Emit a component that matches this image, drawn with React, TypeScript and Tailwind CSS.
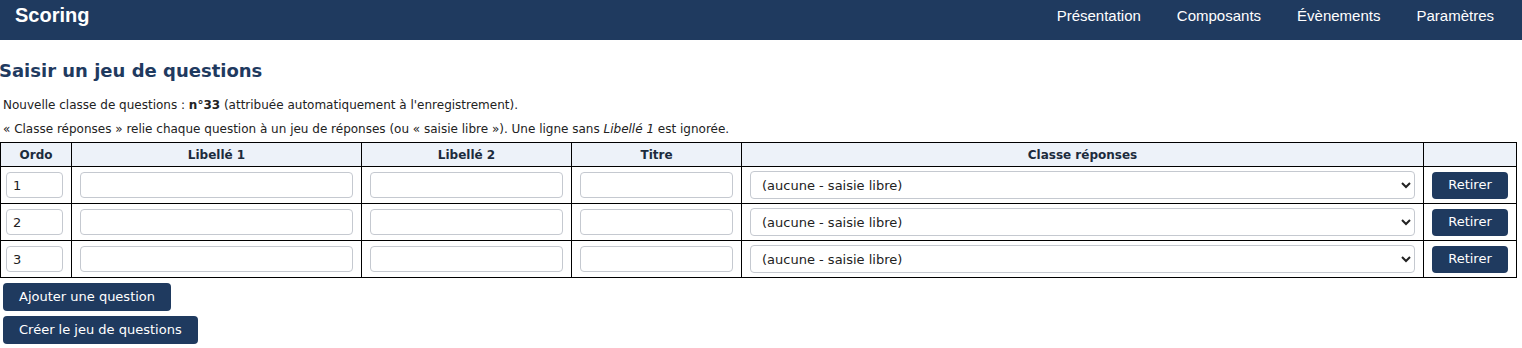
import React from "react";

const rows = [1, 2, 3];

export default function App() {
  return (
    <div className="min-h-[348px] bg-white text-[#222] font-['DejaVu_Sans',sans-serif]">
      <header className="h-[40px] bg-[#1f3a5f] flex items-start justify-between pl-[15px] pr-[10px] font-['Liberation_Sans',Arial,sans-serif] text-white">
        <div className="text-[20px] font-bold leading-[20px] pt-[5px]">Scoring</div>
        <nav className="flex text-[15px] leading-[15px] pt-[8px]">
          {["Présentation", "Composants", "Évènements", "Paramètres"].map((t) => (
            <a key={t} className="px-[18px]">{t}</a>
          ))}
        </nav>
      </header>
      <main className="pr-[6px]">
        <h1 className="text-[18px] font-bold text-[#1f3a5f] leading-[22px] mt-[20px] ml-[-1px]">Saisir un jeu de questions</h1>
        <p className="text-[12px] leading-[14px] mt-[16px] ml-[3px]">
          Nouvelle classe de questions : <b>n°33</b> (attribuée automatiquement à l'enregistrement).
        </p>
        <p className="text-[12px] leading-[14px] mt-[10px] ml-[3px]">
          « Classe réponses » relie chaque question à un jeu de réponses (ou « saisie libre »). Une ligne sans <i>Libellé 1</i> est ignorée.
        </p>
        <table className="mt-[6px] w-full table-fixed border-collapse text-[12px]">
          <colgroup>
            <col className="w-[71px]" />
            <col className="w-[290px]" />
            <col className="w-[210px]" />
            <col className="w-[170px]" />
            <col className="w-[682px]" />
            <col className="w-[93px]" />
          </colgroup>
          <thead>
            <tr className="bg-[#edf2f9] h-[24px]">
              {["Ordo", "Libellé 1", "Libellé 2", "Titre", "Classe réponses", ""].map((h, i) => (
                <th key={i} className="border border-black font-bold text-[#1c2b3d] text-center py-0">{h}</th>
              ))}
            </tr>
          </thead>
          <tbody>
            {rows.map((n) => (
              <tr key={n} className="h-[37px]">
                <td className="border border-black pl-[5px] pr-[8px]">
                  <input defaultValue={String(n)} className="w-[57px] h-[26px] border border-[#c5c9d0] rounded-[4px] px-[6px] text-[13px] text-[#222] block" />
                </td>
                {[0, 1, 2].map((k) => (
                  <td key={k} className="border border-black px-[8px]">
                    <input className="w-full h-[26px] border border-[#c5c9d0] rounded-[4px] px-[6px] block" />
                  </td>
                ))}
                <td className="border border-black px-[8px]">
                  <select className="w-full h-[28px] border border-[#c5c9d0] rounded-[4px] pl-[7px] pr-[6px] text-[13px] text-[#222] bg-white block">
                    <option>(aucune - saisie libre)</option>
                  </select>
                </td>
                <td className="border border-black px-[8px]">
                  <button className="w-[76px] h-[27px] bg-[#1f3a5f] text-white rounded-[4px] text-[13px] block">Retirer</button>
                </td>
              </tr>
            ))}
          </tbody>
        </table>
        <div className="flex flex-col items-start gap-[5px] mt-[5px] ml-[3px]">
          <button className="h-[28px] px-[16px] bg-[#1f3a5f] text-white rounded-[4px] text-[13px]">Ajouter une question</button>
          <button className="h-[28px] px-[16px] bg-[#1f3a5f] text-white rounded-[4px] text-[13px]">Créer le jeu de questions</button>
        </div>
      </main>
    </div>
  );
}
